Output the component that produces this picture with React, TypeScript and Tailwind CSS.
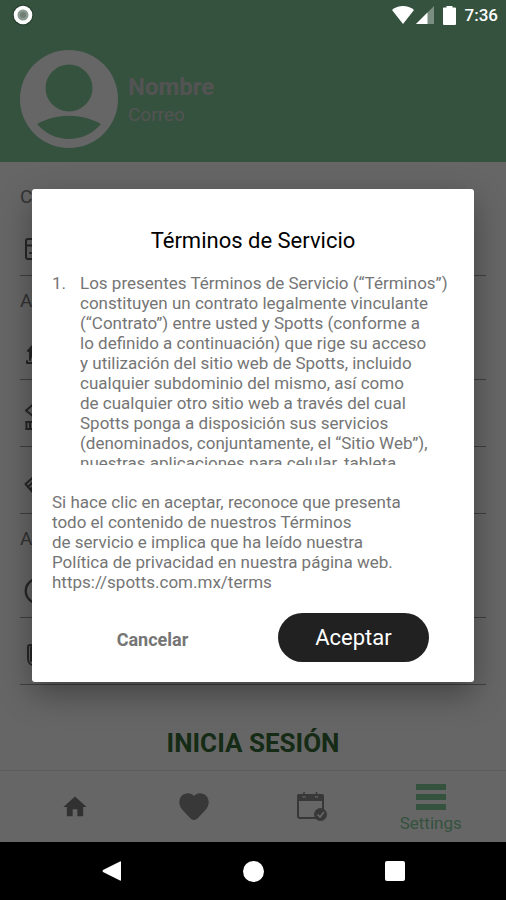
import type { ReactNode } from 'react';

type Section = {
  title: string;
  rows: { id: string; label: string; height: string; icon: ReactNode }[];
};

const stroke = {
  fill: 'none',
  stroke: 'currentColor',
  strokeWidth: 2,
  strokeLinecap: 'round' as const,
  strokeLinejoin: 'round' as const,
};

const CalendarRowIcon = () => (
  <svg viewBox="0 0 24 24" className="size-6" {...stroke}>
    <rect x="2" y="2" width="20" height="20" rx="2" />
    <path d="M2 8.500h20M6 16h1M11 16h2M17 16h1" />
  </svg>
);

const PlaceIcon = () => (
  <svg viewBox="0 0 24 24" className="size-6" {...stroke}>
    <path d="M4 10L12 1l8 9M6 9v10M8 7v9M3 20v2h18v-2M8 14h8M16 7v9M18 9v10" />
  </svg>
);

const StoreIcon = () => (
  <svg viewBox="0 0 24 28" className="h-7 w-6" {...stroke}>
    <path d="M12 -1L2 7.500l10 8 10-8z" />
    <path d="M2 19h20M2 26h20M2.500 19v7M6 19v7M10 19v7M14 19v7" />
  </svg>
);

const TicketIcon = () => (
  <svg viewBox="0 0 24 24" className="size-6" {...stroke}>
    <path d="M13 2L1.500 12l7 8L21 9zM12 7l-7 7M14 10l-7 7" />
  </svg>
);

const HelpIcon = () => (
  <svg viewBox="0 0 24 24" className="size-7" {...stroke}>
    <circle cx="12" cy="12" r="10.5" />
    <path d="M12 11v6M12 7v1" />
  </svg>
);

const DocumentIcon = () => (
  <svg viewBox="0 0 24 24" className="size-6" {...stroke}>
    <path d="M20 2H6a2 2 0 0 0-2 2v11c0 4 2 7 5 7h11zM7 4v14" />
  </svg>
);

const sections: Section[] = [
  {
    title: 'C',
    rows: [{ id: 'calendar', label: 'Calendario', height: 'h-[62px]', icon: <CalendarRowIcon /> }],
  },
  {
    title: 'A',
    rows: [
      { id: 'place', label: 'Lugar', height: 'h-[62px]', icon: <PlaceIcon /> },
      { id: 'store', label: 'Tienda', height: 'h-[67px]', icon: <StoreIcon /> },
      { id: 'ticket', label: 'Boletos', height: 'h-[67px]', icon: <TicketIcon /> },
    ],
  },
  {
    title: 'A',
    rows: [
      { id: 'help', label: 'Ayuda', height: 'h-[62px]', icon: <HelpIcon /> },
      { id: 'document', label: 'Documento', height: 'h-[67px]', icon: <DocumentIcon /> },
    ],
  },
];

function StatusBar() {
  return (
    <div className="absolute inset-x-0 top-0 z-20 flex h-[30px] items-center justify-between pr-2 pl-3 text-white">
      <svg viewBox="0 0 22 22" className="size-[22px]">
        <circle cx="11" cy="11" r="10.500" fill="#1f3327" opacity="0.6" />
        <circle cx="11" cy="11" r="9.300" fill="#fff" />
        <circle cx="11" cy="11" r="5.500" fill="#8b9a90" />
        <circle cx="11" cy="11" r="3" fill="#6f7f75" />
      </svg>
      <div className="flex items-center">
        <svg viewBox="0 0 22 18" className="mr-0.5 h-[18px] w-[22px]" fill="currentColor">
          <path d="M0 4C6-1.300 16-1.300 22 4L11 18z" />
        </svg>
        <svg viewBox="0 0 18 18" className="mr-[9px] size-[18px]" fill="currentColor">
          <path d="M18 0v18H0z" opacity="0.35" />
          <path d="M11.500 6.500V18H0z" />
        </svg>
        <svg viewBox="0 0 13 19" className="mr-[9px] h-[19px] w-[13px]" fill="currentColor">
          <path d="M3.500 0h6v1.500H12a1 1 0 0 1 1 1V18a1 1 0 0 1-1 1H1a1 1 0 0 1-1-1V2.500a1 1 0 0 1 1-1h2.500z" />
        </svg>
        <span className="text-[17px] leading-5 font-medium">7:36</span>
      </div>
    </div>
  );
}

function ProfileHeader() {
  return (
    <header className="flex h-[162px] items-center gap-[10px] bg-[#85cd9e] px-5 pt-9">
      <svg viewBox="0 0 98 98" className="size-[98px]">
        <circle cx="49" cy="49" r="49" fill="#fff" />
        <circle cx="49" cy="38" r="23.500" fill="#85cd9e" />
        <path d="M17 74C36 63 62 63 81 74C64 94 34 94 17 74z" fill="#85cd9e" />
      </svg>
      <div className="pt-1 text-[#d0d0d0]">
        <h1 className="text-2xl leading-7 font-bold">Nombre</h1>
        <p className="text-[19px] leading-7">Correo</p>
      </div>
    </header>
  );
}

function BottomNav() {
  return (
    <nav className="flex h-[72px] border-t border-[#e8e8e8] px-4 text-[#8c8c8c]">
      <a href="#home" aria-label="Inicio" className="flex flex-1 items-center justify-center text-[#7a7a7a]">
        <svg viewBox="0 0 24 24" className="size-7" fill="currentColor">
          <path d="M10 20v-6h4v6h5v-8h3L12 3 2 12h3v8z" />
        </svg>
      </a>
      <a href="#favorites" aria-label="Favoritos" className="flex flex-1 items-center justify-center">
        <svg viewBox="0 0 30 27" className="h-[27px] w-[30px]" fill="currentColor">
          <path d="M15 3C18-1 24-.5 27 2.500C31 7 30.500 12.500 26 17.500L19 25C16.500 27.500 13.500 27.500 11 25L4 17.500C-.5 12.500-1 7 3 2.500C6-.5 12-1 15 3z" />
        </svg>
      </a>
      <a href="#events" aria-label="Eventos" className="flex flex-1 items-center justify-center">
        <svg viewBox="0 0 30 29" className="h-[29px] w-[30px]">
          <rect x="1" y="3" width="25" height="23" rx="2" fill="none" stroke="currentColor" strokeWidth="2" />
          <path d="M0 9V4q0-2 2-2h3.500v3.500h3V2h9.500v3.500h3V2h4q2 0 2 2v5z" fill="currentColor" />
          <path d="M7 0v4.500M19.500 0v4.500" stroke="currentColor" strokeWidth="1.500" />
          <circle cx="23.500" cy="22.500" r="6.500" fill="currentColor" />
          <path d="M20.500 22.500l2.500 2.500 4-5" fill="none" stroke="#fff" strokeWidth="1.600" />
        </svg>
      </a>
      <a href="#settings" className="flex flex-1 flex-col items-center pt-[13px] text-[#85cd9e]">
        <svg viewBox="0 0 30 26" className="h-[26px] w-[30px]" fill="currentColor">
          <path d="M0 0h30v6H0zM0 10h30v6H0zM0 20h30v6H0z" />
        </svg>
        <span className="mt-[3px] text-[17px] leading-5">Settings</span>
      </a>
    </nav>
  );
}

function TermsDialog() {
  return (
    <div className="absolute inset-0 z-10 flex items-center bg-black/60 px-8 pt-[29px] pb-[58px]">
      <div
        role="dialog"
        aria-modal="true"
        aria-labelledby="terms-title"
        className="w-full rounded-[3px] bg-white px-5 pt-[38px] pb-5 text-[17px] leading-5 text-[#757575] shadow-[0_12px_32px_rgba(0,0,0,0.35)]"
      >
        <h2 id="terms-title" className="mb-[18px] text-center text-[22px] leading-7 text-black">
          Términos de Servicio
        </h2>

        <div className="flex h-48 overflow-y-auto whitespace-nowrap [scrollbar-width:none]">
          <span className="w-7 shrink-0">1.</span>
          <p>
            Los presentes Términos de Servicio (“Términos”)
            <br />
            constituyen un contrato legalmente vinculante
            <br />
            (“Contrato”) entre usted y Spotts (conforme a
            <br />
            lo definido a continuación) que rige su acceso
            <br />
            y utilización del sitio web de Spotts, incluido
            <br />
            cualquier subdominio del mismo, así como
            <br />
            de cualquier otro sitio web a través del cual
            <br />
            Spotts ponga a disposición sus servicios
            <br />
            (denominados, conjuntamente, el “Sitio Web”),
            <br />
            nuestras aplicaciones para celular, tableta
          </p>
        </div>

        <p className="mt-[27px]">
          Si hace clic en aceptar, reconoce que presenta
          <br />
          todo el contenido de nuestros Términos
          <br />
          de servicio e implica que ha leído nuestra
          <br />
          Política de privacidad en nuestra página web.
          <br />
          https://spotts.com.mx/terms
        </p>

        <div className="mt-[21px] grid grid-cols-2 justify-items-center">
          <button type="button" className="px-4 pt-1 text-lg font-bold">
            Cancelar
          </button>
          <button type="button" className="h-[49px] w-[151px] rounded-full bg-[#212121] text-[22px] text-white">
            Aceptar
          </button>
        </div>
      </div>
    </div>
  );
}

export default function App() {
  return (
    <div className="relative flex min-h-screen flex-col bg-white font-[Roboto,sans-serif]">
      <StatusBar />
      <ProfileHeader />

      <main className="flex flex-1 flex-col px-5 pt-[10px]">
        {sections.map((section, i) => (
          <section key={i}>
            <h2 className="flex h-[42px] items-center pt-2 text-[19px] text-[#808080]">{section.title}</h2>
            <ul>
              {section.rows.map((row) => (
                <li key={row.id} className={`flex items-center border-b border-[#a0a0a0] pt-2 pl-1 text-[#606060] ${row.height}`}>
                  <a href={`#${row.id}`} aria-label={row.label}>
                    {row.icon}
                  </a>
                </li>
              ))}
            </ul>
          </section>
        ))}
        <button type="button" className="mx-auto mt-auto pb-[11px] text-[26px] leading-8 font-bold text-[#356c35]">
          INICIA SESIÓN
        </button>
      </main>

      <BottomNav />
      <TermsDialog />

      <div className="relative z-20 flex h-[58px] items-center justify-center gap-[121px] bg-black text-white">
        <button type="button" aria-label="Atrás">
          <svg viewBox="0 0 20 20" className="size-5" fill="currentColor">
            <path d="M18 0.500Q19 0 19 1v18q0 1-1 .5L1 11Q0 10 1 9z" />
          </svg>
        </button>
        <button type="button" aria-label="Inicio" className="size-[21px] rounded-full bg-white" />
        <button type="button" aria-label="Recientes" className="size-5 rounded-[2px] bg-white" />
      </div>
    </div>
  );
}
